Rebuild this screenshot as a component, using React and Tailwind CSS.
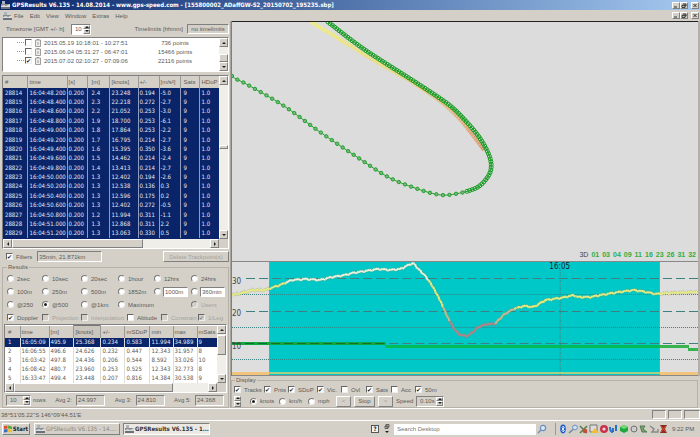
import React from 'react';

const RAISED = 'border border-t-white border-l-white border-r-[#808080] border-b-[#808080] bg-[#d4d0c8]';
const SUNKEN = 'border border-t-[#808080] border-l-[#808080] border-r-white border-b-white';
const LABELS = "font-['Liberation_Sans',sans-serif]";
const NUMBERS = "font-['DejaVu_Sans_Condensed','DejaVu_Sans',sans-serif]";

const POINT_COLUMNS = [
  { name: '#', width: 'w-[24px]', pad: 'pl-[2px]' },
  { name: 'time', width: 'w-[40px]', pad: 'pl-[2px]' },
  { name: '[s]', width: 'w-[20px]', pad: 'pl-[1px]' },
  { name: '[m]', width: 'w-[22px]', pad: 'pl-[4px]' },
  { name: '[knots]', width: 'w-[29px]', pad: 'pl-[2px]' },
  { name: '+/-', width: 'w-[21px]', pad: 'pl-[1px]' },
  { name: '[m/s²]', width: 'w-[21px]', pad: 'pl-[1px]' },
  { name: 'Sats', width: 'w-[19px]', pad: 'pl-[3px]' },
  { name: 'HDoP', width: 'w-[20px]', pad: 'pl-[2px]' },
];

const POINTS = [
  ['28814', '16:04:48.200', '2.4', '23.248', '0.194', '-5.0'],
  ['28815', '16:04:48.400', '2.3', '22.218', '0.272', '-2.7'],
  ['28816', '16:04:48.600', '2.2', '21.052', '0.253', '-3.0'],
  ['28817', '16:04:48.800', '1.9', '18.700', '0.253', '-6.1'],
  ['28818', '16:04:49.000', '1.8', '17.864', '0.253', '-2.2'],
  ['28819', '16:04:49.200', '1.7', '16.795', '0.214', '-2.7'],
  ['28820', '16:04:49.400', '1.6', '15.395', '0.350', '-3.6'],
  ['28821', '16:04:49.600', '1.5', '14.462', '0.214', '-2.4'],
  ['28822', '16:04:49.800', '1.4', '13.413', '0.214', '-2.7'],
  ['28823', '16:04:50.000', '1.3', '12.402', '0.194', '-2.6'],
  ['28824', '16:04:50.200', '1.3', '12.538', '0.136', '0.3'],
  ['28825', '16:04:50.400', '1.3', '12.596', '0.175', '0.2'],
  ['28826', '16:04:50.600', '1.3', '12.402', '0.272', '-0.5'],
  ['28827', '16:04:50.800', '1.2', '11.994', '0.311', '-1.1'],
  ['28828', '16:04:51.000', '1.3', '12.868', '0.311', '2.2'],
  ['28829', '16:04:51.200', '1.3', '13.063', '0.330', '0.5'],
].map(([id, time, m, knots, err, acc]) => [id, time, '0.200', m, knots, err, acc, '9', '1.0']);

const RESULT_COLUMNS = [
  { name: '#', width: 'w-[15px]', pad: 'pl-[3px]' },
  { name: 'time', width: 'w-[29px]', pad: 'pl-[1px]' },
  { name: '[m]', width: 'w-[24px]', pad: 'pl-[1px]' },
  { name: '[knots]', width: 'w-[27px]', pad: 'pl-[2px]' },
  { name: '+/-', width: 'w-[24px]', pad: 'pl-[2px]' },
  { name: 'mSDoP', width: 'w-[25px]', pad: 'pl-[2px]' },
  { name: 'min', width: 'w-[24px]', pad: 'pl-[2px]' },
  { name: 'max', width: 'w-[24px]', pad: 'pl-[1px]' },
  { name: 'mSats', width: 'w-[21px]', pad: 'pl-[1px]' },
];

const RESULTS = [
  ['1', '16:05:09', '495.9', '25.368', '0.234', '0.583', '11.994', '34.989', '9'],
  ['2', '16:06:55', '496.6', '24.626', '0.232', '0.447', '12.343', '31.957', '8'],
  ['3', '16:03:42', '497.8', '24.436', '0.206', '0.544', '8.592', '33.026', '10'],
  ['4', '16:08:42', '480.7', '23.960', '0.253', '0.525', '12.343', '32.773', '8'],
  ['5', '16:33:47', '499.4', '23.448', '0.207', '0.816', '14.384', '30.538', '9'],
];

const SESSIONS = [
  { range: '2015.05.19 10:18:01 - 10:27:51', points: '736 points', checked: false },
  { range: '2015.06.04 05:31:27 - 06:47:01', points: '15466 points', checked: false },
  { range: '2015.07.02 02:10:27 - 07:09:06', points: '22116 points', checked: true },
];

const RADIOS = [
  '2sec', '10sec', '20sec', '1hour', '12hrs', '24hrs',
  '100m', '250m', '500m', '1852m', { value: '1000m' }, { value: '360min' },
  '@250', '@500', '@1km', 'Maximum', null, 'Users',
];

const SATELLITES = ['01', '03', '04', '09', '11', '16', '23', '26', '31', '32'];

// Map track, in map pixels
const TRACK_UP = [[96, 0], [126, 23], [150, 39], [180, 58], [206, 75], [222, 87], [240, 106], [251, 121], [258, 136], [259, 147], [255, 156], [246, 165], [233, 170]];
const TRACK_LOW = [[0, 54], [4, 57], [16, 63], [52, 84], [88, 110], [125, 135], [156, 155], [183, 166], [203, 172], [216, 173], [233, 170]];
const TRACK_OLD = [[79, 0], [104, 15], [130, 31], [150, 43], [180, 60], [208, 79], [226, 95], [240, 112], [252, 128]];

// Speed curve, in chart pixels
const SPEED = [
  [0, 33], [10, 31], [21, 28], [33, 28], [48, 23], [60, 18], [73, 17], [88, 18], [100, 15], [113, 13], [120, 11],
  [133, 9], [146, 7], [158, 8], [168, 7], [176, 3], [181, 1], [185, 6], [193, 14], [200, 24], [208, 39],
  [215, 55], [223, 69], [228, 73], [234, 74], [238, 72], [246, 65], [254, 62], [262, 62], [272, 52], [281, 47],
  [291, 44], [301, 45], [313, 38], [328, 36], [342, 33], [344, 35], [358, 35], [368, 33], [380, 31], [393, 29],
  [401, 28], [413, 30], [423, 32], [438, 31], [465, 30],
];

const toPath = (points) => `M${points.map((p) => p.join(' ')).join('L')}`;

// Catmull-Rom, so that the boat's track bends instead of breaking
const smooth = (points) => {
  const out = [];
  for (let i = 0; i < points.length - 1; i += 1) {
    const [a, b, c, d] = [points[i - 1] || points[i], points[i], points[i + 1], points[i + 2] || points[i + 1]];
    for (let t = 0; t < 1; t += 0.125) {
      out.push([0, 1].map((k) => 0.5 * (2 * b[k] + (c[k] - a[k]) * t
        + (2 * a[k] - 5 * b[k] + 4 * c[k] - d[k]) * t * t
        + (3 * b[k] - a[k] - 3 * c[k] + d[k]) * t * t * t)));
    }
  }
  out.push(points[points.length - 1]);
  return out;
};

// Walks a polyline and returns evenly spaced points on it
const spread = (points, step) => {
  const out = [];
  let left = 0;
  for (let i = 1; i < points.length; i += 1) {
    const [x1, y1] = points[i - 1];
    const [x2, y2] = points[i];
    const length = Math.hypot(x2 - x1, y2 - y1);
    let at = left;
    while (at < length) {
      out.push([x1 + ((x2 - x1) * at) / length, y1 + ((y2 - y1) * at) / length]);
      at += step;
    }
    left = at - length;
  }
  return out;
};

const speedColor = (y) => {
  if (y < 20) return '#eef3dc';
  if (y < 46) return '#e6ec80';
  if (y < 60) return '#cdb98d';
  return '#b8808a';
};

const Arrow = ({ dir }) => {
  const d = { up: 'M0 3L2 1L4 3Z', down: 'M0 1L2 3L4 1Z', left: 'M3 0L1 2L3 4Z', right: 'M1 0L3 2L1 4Z' }[dir];
  return <svg viewBox="0 0 4 4" className="w-[4px] h-[4px] block" fill="#222"><path d={d} /></svg>;
};

const ScrollButton = ({ dir }) => (
  <button aria-label={`Scroll ${dir}`} className={`w-[9px] h-[9px] shrink-0 flex items-center justify-center ${RAISED}`}>
    <Arrow dir={dir} />
  </button>
);

const VScroll = ({ space, thumb }) => (
  <div className="w-[9px] shrink-0 flex flex-col bg-[#f0eee9]">
    <ScrollButton dir="up" />
    <div className={space} />
    <div className={`${thumb} ${RAISED}`} />
    <div className="flex-1" />
    <ScrollButton dir="down" />
  </div>
);

const HScroll = ({ thumb }) => (
  <div className="h-[9px] shrink-0 flex bg-[#f0eee9]">
    <ScrollButton dir="left" />
    <div className={`${thumb} ${RAISED}`} />
    <div className="flex-1" />
    <ScrollButton dir="right" />
    <div className="w-[9px] bg-[#d4d0c8]" />
  </div>
);

const Tick = ({ label, checked, disabled, className = '' }) => (
  <label className={`flex items-center gap-[3px] whitespace-nowrap ${disabled ? 'text-[#a5a29b]' : ''} ${className}`}>
    <input
      type="checkbox"
      defaultChecked={checked}
      disabled={disabled}
      className="appearance-none w-[7px] h-[7px] shrink-0 flex items-center justify-center border border-t-[#666] border-l-[#666] border-r-[#eee] border-b-[#eee] bg-white disabled:bg-[#d4d0c8] text-[#222] disabled:text-[#888] checked:before:content-['✔'] checked:before:text-[6px] checked:before:leading-none"
    />
    {label}
  </label>
);

const Radio = ({ name, label, value, checked, disabled }) => (
  <div className={`flex items-center gap-[2px] ${disabled ? 'text-[#a5a29b]' : ''}`}>
    <label className="flex items-center gap-[3px] whitespace-nowrap">
      <input
        type="radio"
        name={name}
        aria-label={label || value}
        defaultChecked={checked}
        disabled={disabled}
        className="appearance-none w-[7px] h-[7px] shrink-0 rounded-full flex items-center justify-center border border-t-[#777] border-l-[#777] border-r-[#eee] border-b-[#eee] bg-white disabled:bg-[#d4d0c8] checked:before:content-[''] checked:before:w-[3px] checked:before:h-[3px] checked:before:rounded-full checked:before:bg-[#222]"
      />
      {label}
    </label>
    {value && <input aria-label={`${value} value`} defaultValue={value} className={`w-[25px] h-[10px] bg-white px-px ${SUNKEN}`} />}
  </div>
);

const SpinArrows = () => (
  <span className="flex flex-col w-[7px] shrink-0">
    <button aria-label="Increase" className={`flex-1 flex items-center justify-center overflow-hidden ${RAISED}`}><Arrow dir="up" /></button>
    <button aria-label="Decrease" className={`flex-1 flex items-center justify-center overflow-hidden ${RAISED}`}><Arrow dir="down" /></button>
  </span>
);

const Spinner = ({ label, value, className }) => (
  <span className={`flex ${SUNKEN} ${className}`}>
    <input aria-label={label} defaultValue={value} className="flex-1 min-w-0 pl-[3px] bg-transparent" />
    <SpinArrows />
  </span>
);

const WindowButtons = () => (
  <div className="ml-auto flex items-center text-[#222]">
    {['Minimize', 'Restore', 'Close'].map((name) => (
      <button key={name} aria-label={name} className={`w-[8px] h-[7px] flex items-center justify-center last:ml-[3px] ${RAISED}`}>
        <svg viewBox="0 0 6 5" className="w-[6px] h-[5px]" fill="none" stroke="currentColor" strokeWidth="0.9">
          {name === 'Minimize' && <path d="M1 4H4" />}
          {name === 'Restore' && <path d="M2 1H5V3H4M1 2.3H4V4.4H1Z" />}
          {name === 'Close' && <path d="M1.5 1L4.5 4M4.5 1L1.5 4" />}
        </svg>
      </button>
    ))}
  </div>
);

const AppIcon = ({ className = '' }) => (
  <svg viewBox="0 0 9 8" className={`w-[9px] h-[8px] shrink-0 ${className}`}>
    <rect y="3" width="9" height="5" fill="#8b8b8d" />
    <path d="M0 5L3 4L5 5L9 3V6H0Z" fill="#d9dde0" />
    <path d="M1 0H4V3H1Z" fill="#a9b4bf" />
    <path d="M0 7H9" stroke="#4d5563" />
  </svg>
);

const Grid = ({ columns, rows, isSelected, rules, pressed, className }) => (
  <table className={`w-full table-fixed border-collapse whitespace-nowrap ${NUMBERS} ${className}`}>
    <thead className={LABELS}>
      <tr className="h-[12px] bg-[#d4d0c8]">
        {columns.map((c) => (
          <th key={c.name} className={`${c.width} ${c.pad} text-left font-normal border-r border-r-[#999] ${c.name === pressed ? 'border-t border-l border-[#777] bg-[#cac6be]' : ''}`}>
            {c.name}
          </th>
        ))}
      </tr>
    </thead>
    <tbody>
      {rows.map((row, i) => (
        <tr key={row[0]} className={isSelected(i) ? 'bg-[#0a246a] text-[#e4e8f2]' : ''}>
          {row.map((cell, j) => (
            <td key={columns[j].name} className={`${columns[j].pad} ${rules}`}>{cell}</td>
          ))}
        </tr>
      ))}
    </tbody>
  </table>
);

const SidePanel = () => (
  <div className="w-[33%] shrink-0 flex flex-col pl-[2px] pr-px border-r border-r-[#a8a49c]">
    <div className="h-[16px] flex items-center pl-[4px]">
      <span className="w-[65px]">Timezone [GMT +/- h]</span>
      <Spinner label="Timezone" value="10" className="w-[20px] h-[11px] bg-white" />
      <span className="ml-auto pr-[4px]">Timelimits [hhmm]</span>
      <button className={`w-[42px] h-[10px] ${SUNKEN}`}>no timelimits</button>
    </div>

    <div className={`h-[35px] flex bg-white ${SUNKEN}`}>
      <ul className="flex-1 min-w-0">
        {SESSIONS.map((s) => (
          <li key={s.range} className="h-[9px] flex items-center">
            <span className="w-[7px] ml-[14px] border-b border-dotted border-[#999]" />
            <Tick
              checked={s.checked}
              className="ml-px"
              label={(
                <>
                  <svg viewBox="0 0 6 8" className="w-[6px] h-[8px]" fill="#eee" stroke="#888" strokeWidth="0.8"><path d="M0.5 1H5.5V7.5H0.5ZM2 0.5H4M3 3V6" /></svg>
                  <span>{s.range}</span>
                </>
              )}
            />
            <span className="ml-auto w-[60px] text-center">{s.points}</span>
            <span className="w-[14px]" />
          </li>
        ))}
      </ul>
      <VScroll space="h-[7px]" thumb="h-[9px]" />
    </div>

    <div className={`mt-[3px] h-[174px] flex flex-col bg-white ${SUNKEN}`}>
      <div className="flex-1 min-h-0 flex">
        <div className="flex-1 min-w-0 bg-[#0a246a]">
          <Grid columns={POINT_COLUMNS} rows={POINTS} isSelected={() => true} rules="border-r border-r-[#8f9cc0]" className="h-[162px]" />
        </div>
        <VScroll space="h-[60px]" thumb="h-[4px]" />
      </div>
      <HScroll thumb="w-[58%]" />
    </div>

    <div className="h-[15px] flex items-center pl-[4px]">
      <Tick label="Filters" checked />
      <span className={`ml-[5px] w-[65px] h-[11px] px-px flex items-center ${SUNKEN}`}>35min, 21.871km</span>
      <button disabled className={`ml-auto w-[66px] h-[11px] text-[#a5a29b] ${RAISED}`}>Delete Trackpoint(s)</button>
    </div>

    <fieldset className="flex-1 min-w-0 flex flex-col border border-[#b5b1a9] px-px">
      <legend className="ml-[3px] px-px leading-[7px]">Results</legend>
      <div className="flex flex-col pl-[3px] pt-px">
        <div className="grid grid-cols-[35px_39px_37px_36px_37px_1fr] auto-rows-[13px] items-center">
          {RADIOS.map((r, i) => {
            if (!r) return <span key="blank" />;
            return r.value
              ? <Radio key={r.value} name="span" value={r.value} />
              : <Radio key={r} name="span" label={r} checked={r === '@500'} disabled={i === 17} />;
          })}
        </div>
        <div className="h-[13px] grid grid-cols-[35px_39px_46px_34px_37px_1fr] items-center">
          <Tick label="Doppler" checked />
          <Tick label="Projection" disabled />
          <Tick label="Interpolation" disabled />
          <Tick label="Altitude" />
          <Tick label="Constrain" disabled />
          <Tick label="1/Leg" checked disabled />
        </div>
      </div>

      <div className={`flex flex-col bg-white ${SUNKEN}`}>
        <div className="flex">
          <div className="flex-1 min-w-0">
            <Grid
              columns={RESULT_COLUMNS}
              rows={RESULTS}
              isSelected={(i) => i === 0}
              rules="border-r border-r-[#ddd]"
              pressed="[knots]"
              className="h-[58px]"
            />
          </div>
          <VScroll space="h-px" thumb="h-[20px]" />
        </div>
        <HScroll thumb="w-[72%]" />
      </div>

      <div className="flex-1 flex items-center pl-[2px]">
        <Spinner label="Rows" value="10" className="w-[25px] h-[11px]" />
        <span className="pl-[2px]">rows</span>
        {[['Avg 2:', '24.997'], ['Avg 3:', '24.810'], ['Avg 5:', '24.368']].map(([name, value]) => (
          <span key={name} className="flex-1 flex items-center justify-end gap-[4px]">
            {name}
            <span className={`w-[29px] h-[11px] px-px flex items-center ${SUNKEN}`}>{value}</span>
          </span>
        ))}
        <span className="w-[3px]" />
      </div>
    </fieldset>
  </div>
);

const TrackMap = () => {
  const up = smooth(TRACK_UP);
  const low = smooth(TRACK_LOW);
  return (
    <div className="flex-1 min-h-0 relative bg-[#dcdcdc] border-t border-t-[#222]">
      <svg viewBox="0 0 466 241" preserveAspectRatio="xMinYMin slice" className="absolute inset-0 w-full h-full" fill="none">
        <defs>
          <linearGradient id="old" x1="0" y1="0" x2="1" y2="1">
            <stop offset="0" stopColor="#eeee82" />
            <stop offset="0.5" stopColor="#ecd382" />
            <stop offset="1" stopColor="#de9870" />
          </linearGradient>
        </defs>
        <path d={toPath(smooth(TRACK_OLD))} stroke="url(#old)" strokeWidth="4" strokeDasharray="2.2 0.4" />
        <path d={toPath(low)} stroke="#1fa02a" />
        <path d={toPath(up)} stroke="#1fa02a" />
        {spread(low, 6.6).map(([x, y]) => <circle key={x} cx={x} cy={y} r="1.7" stroke="#1fa02a" fill="#7cb681" />)}
        {spread(up, 2.8).map(([x, y]) => <circle key={`${x}-${y}`} cx={x} cy={y} r="2" stroke="#149c22" strokeWidth="1" />)}
      </svg>
      <div className="absolute right-[2px] bottom-[3px] flex gap-[3px] text-[7px] font-bold text-[#2fae42]">
        <span className="text-[#444] font-normal">3D</span>
        {SATELLITES.map((s) => <span key={s}>{s}</span>)}
      </div>
    </div>
  );
};

const SpeedChart = () => {
  const samples = spread(SPEED, 1.6).map(([x, y], i) => [x, y + [0.7, -0.6, 0.2, -0.9, 0.8][i % 5]]);
  return (
    <div className="h-[115px] shrink-0 border-t border-t-[#888] border-b border-b-[#888] bg-[#dedede]">
      <svg viewBox="0 0 465 113" preserveAspectRatio="none" className="w-full h-full block" fill="none">
        <rect x="37" y="0" width="390" height="113" fill="#00c8c8" />
        <g stroke="#3c8080" strokeWidth="1">
          {[16.5, 49.5, 81.5].map((y) => <path key={y} d={`M14 ${y}H465`} strokeDasharray="9 4" />)}
          {[32.5, 65.5, 97.5].map((y) => <path key={y} d={`M0 ${y}H465`} strokeDasharray="1 1" />)}
          <path d="M327.5 8V113" strokeDasharray="1 1" />
        </g>
        <path d="M0 111.5H37M427 111.5H465" stroke="#f2c47c" strokeWidth="3" />
        <path d="M37 111H427" stroke="#a8cf86" strokeWidth="2" />
        <path d="M0 81.5H153" stroke="#10a840" strokeWidth="3" />
        <path d="M0 81.5H153" stroke="#186e30" strokeDasharray="9 4" />
        <path d="M153 84.5H456" stroke="#00bc58" strokeWidth="3" />
        <path d="M427 84.5H456M455 87.5H465" stroke="#38b44e" strokeWidth="3" />
        <path d={toPath(samples)} stroke="#8c8a5c" strokeOpacity="0.3" strokeWidth="3" />
        {samples.slice(1).map(([x, y], i) => (
          <path key={x} d={`M${samples[i][0]} ${samples[i][1]}L${x} ${y}`} stroke={speedColor(y)} strokeWidth="2" />
        ))}
        <g fill="#444" fontSize="8" className={NUMBERS}>
          <text x="0" y="22">30</text>
          <text x="0" y="54">20</text>
          <text x="0" y="87">10</text>
          <text x="327" y="7" textAnchor="middle" fill="#123">16:05</text>
        </g>
      </svg>
    </div>
  );
};

const DisplayPanel = () => (
  <fieldset className="shrink-0 h-[31px] min-w-0 border border-[#b5b1a9] mr-[2px] mt-px pl-[2px]">
    <legend className="ml-px px-px leading-[7px]">Display</legend>
    <div className="h-[11px] grid grid-cols-[30px_24px_29px_24px_25px_25px_24px_1fr] items-center">
      <Tick label="Tracks" checked />
      <Tick label="Pnts" checked />
      <Tick label="SDoP" checked />
      <Tick label="Vic." checked />
      <Tick label="Ovl" />
      <Tick label="Sats" checked />
      <Tick label="Acc" />
      <Tick label="50m" checked />
    </div>
    <div className="h-[12px] flex items-center">
      <span className="flex h-[11px] w-[16px]"><SpinArrows /></span>
      <div className="grid grid-cols-[29px_29px_28px]">
        <Radio name="unit" label="knots" checked />
        <Radio name="unit" label="km/h" />
        <Radio name="unit" label="mph" />
      </div>
      <div className="flex gap-[3px]">
        <button className={`w-[15px] h-[11px] text-[#999] ${RAISED}`}>&lt;</button>
        <button className={`w-[21px] h-[11px] ${RAISED}`}>Stop</button>
        <button className={`w-[15px] h-[11px] text-[#999] ${RAISED}`}>&gt;</button>
      </div>
      <span className="pl-[3px] w-[23px]">Speed</span>
      <Spinner label="Speed" value="0.10s" className="w-[28px] h-[11px]" />
    </div>
  </fieldset>
);

const Tray = () => (
  <svg viewBox="0 0 108 10" className="w-[108px] h-[10px]" fill="none">
    <ellipse cx="4" cy="5" rx="2.8" ry="4.4" fill="#1a5cc8" />
    <path d="M2.6 3.5L5.4 6.5L4 8V2L5.4 3.5L2.6 6.5" stroke="#fff" strokeWidth="0.8" />
    <circle cx="16" cy="3.5" r="2.4" fill="#cfe2f5" stroke="#6c8fc0" />
    <path d="M14 5.5L10 9" stroke="#6c7fa0" strokeWidth="1.3" />
    <path d="M21 2L28 9M21 9L28 2" stroke="#5a7f55" strokeWidth="1.6" />
    <circle cx="26" cy="7" r="2.3" fill="#c84c36" />
    <path d="M31 1H38V8H31Z" fill="#ddd" stroke="#777" />
    <path d="M36 4L40 9H32Z" fill="#f0c030" />
    <circle cx="45" cy="5" r="4" fill="#c8324a" />
    <circle cx="45" cy="5" r="1.6" fill="#f4d8dc" />
    <path d="M51 3Q51 8 54 8M57 1V7M54 4V8" stroke="#2870c8" strokeWidth="2" />
    <path d="M61 3L65 1L69 3V7L65 9L61 7Z" fill="#20a83c" />
    <path d="M61 3L65 5L69 3L65 1Z" fill="#70d878" />
    <circle cx="75" cy="5" r="3" fill="#aaa" stroke="#777" />
    <path d="M74 3V7M76 3V7" stroke="#eee" />
    <path d="M81 2H86L84 5L88 8H83Z" fill="#7aa470" stroke="#557b50" />
    <path d="M91 2L95 5L93 8H99V5" stroke="#888" strokeWidth="1.4" />
    <path d="M101 1H108L106 5L108 9H101L103 5Z" fill="#8c2c20" />
    <path d="M102 2L107 8M107 2L102 8" stroke="#d85030" />
  </svg>
);

const App = () => (
  <div className={`min-h-screen flex flex-col bg-[#d4d0c8] text-[#5c5a56] text-[6px] leading-none overflow-hidden ${LABELS}`}>
    <header>
      <div className={`h-[10px] flex items-center gap-[2px] px-px bg-linear-to-r from-[#0a246a] to-[#a6caf0] text-white font-bold ${NUMBERS}`}>
        <AppIcon />
        <h1 className="whitespace-nowrap">GPSResults V6.135 - 14.08.2014 - www.gps-speed.com - [155800002_ADaffGW-S2_20150702_195235.sbp]</h1>
        <WindowButtons />
      </div>
      <nav className="h-[11px] flex items-center gap-[6px] pl-[3px] pr-px">
        <AppIcon className="-mr-[4px]" />
        {['File', 'Edit', 'View', 'Window', 'Extras', 'Help'].map((m) => <button key={m}>{m}</button>)}
        <WindowButtons />
      </nav>
    </header>

    <main className="flex-1 min-h-0 flex">
      <SidePanel />
      <div className="flex-1 min-w-0 flex flex-col">
        <div className="flex-1 flex flex-col border-l border-l-[#808080] border-r-2 border-r-[#b4b0a8]">
          <TrackMap />
          <SpeedChart />
        </div>
        <DisplayPanel />
      </div>
    </main>

    <footer className="shrink-0">
      <div className="h-[12px] flex items-center gap-[2px] pl-px border-t border-t-white">
        <span className="flex-1">38°51'05.22''S 146°09'44.51'E</span>
        <span className={`w-[14px] h-[9px] ${SUNKEN}`} />
        <span className={`w-[14px] h-[9px] ${SUNKEN}`} />
        <span className={`w-[16px] h-[9px] ${SUNKEN}`} />
      </div>
      <div className={`h-[17px] flex items-center px-[2px] border-t border-t-white ${NUMBERS}`}>
        <button className={`w-[28px] h-[12px] flex items-center justify-center gap-px font-bold text-[#222] ${RAISED}`}>
          <svg viewBox="0 0 8 8" className="w-[8px] h-[8px]">
            <path d="M0 1L3.5 0.5V3.5L0 4Z" fill="#e0502c" />
            <path d="M4 0.5L8 1.5V4L4 3.5Z" fill="#58a83c" />
            <path d="M0 4.5L3.5 4V7L0 7.5Z" fill="#3c6cc8" />
            <path d="M4 4L8 4.5V7.5L4 7Z" fill="#ecc038" />
          </svg>
          Start
        </button>
        <button className={`ml-[4px] w-[86px] h-[12px] pl-px flex items-center gap-px text-[#8a8780] whitespace-nowrap ${RAISED}`}>
          <AppIcon />
          GPSResults V6.135 - 14....
        </button>
        <button className={`ml-[3px] w-[87px] h-[12px] pl-px flex items-center gap-px font-bold text-[#333] bg-[#ece9e4] whitespace-nowrap ${SUNKEN}`}>
          <AppIcon />
          GPSResults V6.135 - 1...
        </button>
        <div className="ml-auto flex items-center">
          <button aria-label="Help" className="w-[8px] h-[8px] mr-[5px] border border-[#555] bg-[#f4f2ec] text-[#222] font-bold flex items-center justify-center">?</button>
          <svg viewBox="0 0 6 10" className="w-[6px] h-[10px] mr-[4px]" fill="none" stroke="#444" strokeWidth="0.8">
            <path d="M2 0.5H5V3H2ZM1 2H4V4.5H1Z" />
            <path d="M1 7H5L3 9Z" fill="#222" stroke="none" />
          </svg>
          <input aria-label="Search Desktop" placeholder="Search Desktop" className={`w-[142px] h-[11px] bg-white pl-[3px] placeholder:text-[#777] ${LABELS}`} />
          <svg viewBox="0 0 10 10" className="w-[10px] h-[10px] ml-px" fill="#dceaf8" stroke="#6c8cc0" strokeWidth="1.2">
            <path d="M4 6L1 9" />
            <circle cx="6" cy="4" r="2.6" />
          </svg>
        </div>
        <div className={`ml-[8px] h-[12px] pl-[3px] flex items-center gap-[5px] whitespace-nowrap border-l border-l-[#999] ${LABELS}`}>
          <Tray />
          <span className="w-[26px]">9:22 PM</span>
        </div>
      </div>
    </footer>
  </div>
);

export default App;
